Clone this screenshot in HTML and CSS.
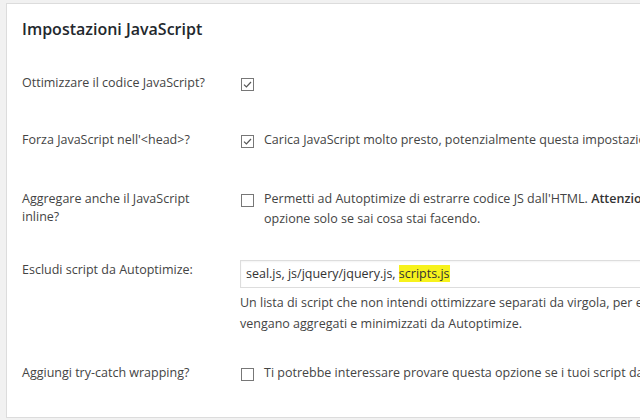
FILE: index.html
```html
<!DOCTYPE html>
<html lang="it">
<head>
<meta charset="utf-8">
<title>Impostazioni JavaScript</title>
<link rel="stylesheet" href="styles.css">
</head>
<body>
<section class="card">
  <h2 class="title">Impostazioni JavaScript</h2>

  <div class="row row-1">
    <div class="label">Ottimizzare il codice JavaScript?</div>
    <div class="field">
      <span class="cb"><svg viewBox="0 0 13 13" width="13" height="13"><rect x="0.5" y="0.5" width="12" height="12" fill="#fff" stroke="#777"/><path d="M3 6.6 L5.4 9 L10 4" fill="none" stroke="#555" stroke-width="1.2"/></svg></span>
    </div>
  </div>

  <div class="row row-2">
    <div class="label">Forza JavaScript nell'&lt;head&gt;?</div>
    <div class="field">
      <span class="cb"><svg viewBox="0 0 13 13" width="13" height="13"><rect x="0.5" y="0.5" width="12" height="12" fill="#fff" stroke="#777"/><path d="M3 6.6 L5.4 9 L10 4" fill="none" stroke="#555" stroke-width="1.2"/></svg></span>
      <span class="text">Carica JavaScript molto presto, potenzialmente questa impostazione può risolvere alcuni problemi</span>
    </div>
  </div>

  <div class="row row-3">
    <div class="label two">Aggregare anche il JavaScript<br>inline?</div>
    <div class="field">
      <span class="cb"><svg viewBox="0 0 13 13" width="13" height="13"><rect x="0.5" y="0.5" width="12" height="12" fill="#fff" stroke="#777"/></svg></span>
      <span class="text">Permetti ad Autoptimize di estrarre codice JS dall'HTML. <strong>Attenzione:</strong> abilita questa<br>opzione solo se sai cosa stai facendo.</span>
    </div>
  </div>

  <div class="row row-4">
    <div class="label">Escludi script da Autoptimize:</div>
    <div class="field col">
      <div class="input">seal.js, js/jquery/jquery.js, <mark>scripts.js</mark></div>
      <p class="desc">Un lista di script che non intendi ottimizzare separati da virgola, per esempio se non vuoi che<br>vengano aggregati e minimizzati da Autoptimize.</p>
    </div>
  </div>

  <div class="row row-5">
    <div class="label">Aggiungi try-catch wrapping?</div>
    <div class="field">
      <span class="cb"><svg viewBox="0 0 13 13" width="13" height="13"><rect x="0.5" y="0.5" width="12" height="12" fill="#fff" stroke="#777"/></svg></span>
      <span class="text">Ti potrebbe interessare provare questa opzione se i tuoi script danno errori</span>
    </div>
  </div>
</section>
</body>
</html>
```

FILE: styles.css
```css
html, body {
  margin: 0;
  padding: 0;
  background: #f1f1f1;
  overflow: hidden;
  width: 640px;
  height: 420px;
}

body {
  font-family: "Open Sans", "Noto Sans", sans-serif;
  font-size: 12.5px;
  color: #444;
}

.card {
  margin: 3px 0 0 6px;
  width: 760px;
  height: 400px;
  background: #fff;
  border: 1px solid #dcdcdc;
  padding: 13px 0 0 15px;
  box-sizing: content-box;
}

.title {
  margin: 0;
  font-size: 16px;
  line-height: 24px;
  font-weight: 600;
  color: #23282d;
}

.row {
  display: grid;
  grid-template-columns: 218px 1fr;
  line-height: 20px;
}

.row-1 { margin-top: 32px; }
.row-2 { margin-top: 37px; }
.row-3 { margin-top: 39px; }
.row-4 { margin-top: 31px; }
.row-5 { margin-top: 29px; }

.label {
  white-space: nowrap;
}

.label.two {
  line-height: 18px;
  padding-top: 1px;
}

.field {
  display: flex;
  align-items: flex-start;
  white-space: nowrap;
}

.field.col {
  flex-direction: column;
}

.cb {
  display: block;
  width: 13px;
  height: 13px;
  margin: 5px 10px 0 1px;
  flex: none;
}

.cb svg {
  display: block;
}

.text strong {
  font-weight: 600;
  color: #333;
}

.input {
  box-sizing: border-box;
  width: 440px;
  height: 28px;
  border: 1px solid #ddd;
  padding: 3px 5px;
  line-height: 20px;
  color: #333;
  box-shadow: inset 0 1px 2px rgba(0, 0, 0, 0.05);
}

.input mark {
  background: #f7f21c;
  color: #333;
}

.desc {
  margin: 4px 0 0;
  line-height: 21px;
}
```
